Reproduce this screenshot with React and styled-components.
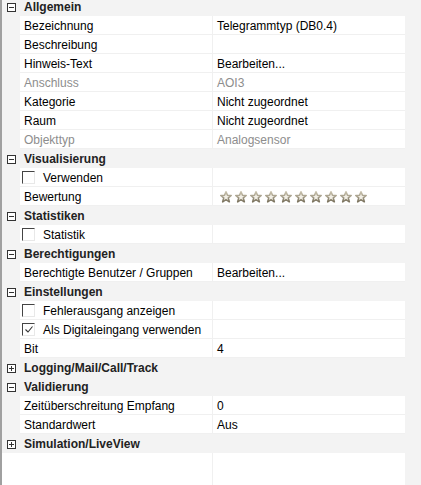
import React from 'react'
import styled, { createGlobalStyle } from 'styled-components'

const groups = [
  {
    title: 'Allgemein',
    open: true,
    rows: [
      { label: 'Bezeichnung', value: 'Telegrammtyp (DB0.4)' },
      { label: 'Beschreibung', value: '' },
      { label: 'Hinweis-Text', value: 'Bearbeiten...' },
      { label: 'Anschluss', value: 'AOI3', disabled: true },
      { label: 'Kategorie', value: 'Nicht zugeordnet' },
      { label: 'Raum', value: 'Nicht zugeordnet' },
      { label: 'Objekttyp', value: 'Analogsensor', disabled: true },
    ],
  },
  {
    title: 'Visualisierung',
    open: true,
    rows: [
      { label: 'Verwenden', check: false },
      { label: 'Bewertung', stars: 10 },
    ],
  },
  {
    title: 'Statistiken',
    open: true,
    rows: [{ label: 'Statistik', check: false }],
  },
  {
    title: 'Berechtigungen',
    open: true,
    rows: [{ label: 'Berechtigte Benutzer / Gruppen', value: 'Bearbeiten...' }],
  },
  {
    title: 'Einstellungen',
    open: true,
    rows: [
      { label: 'Fehlerausgang anzeigen', check: false },
      { label: 'Als Digitaleingang verwenden', check: true },
      { label: 'Bit', value: '4' },
    ],
  },
  { title: 'Logging/Mail/Call/Track', open: false, rows: [] },
  {
    title: 'Validierung',
    open: true,
    rows: [
      { label: 'Zeitüberschreitung Empfang', value: '0' },
      { label: 'Standardwert', value: 'Aus' },
    ],
  },
  { title: 'Simulation/LiveView', open: false, rows: [] },
]

const Global = createGlobalStyle`
  html, body {
    margin: 0;
    padding: 0;
    height: 100%;
    overflow: hidden;
    background: #f3f3f3;
  }
  #root {
    height: 100%;
  }
`

const ExpandBox = ({ open }) => (
  <svg width="9" height="9" viewBox="0 0 9 9">
    <rect x="0.5" y="0.5" width="8" height="8" fill="#fff" stroke="#333" />
    <path d="M2 4.5h5" stroke="#333" />
    {!open && <path d="M4.5 2v5" stroke="#333" />}
  </svg>
)

const Star = () => (
  <svg width="12" height="12" viewBox="0 0 12 12">
    <defs>
      <linearGradient id="starEdge" x1="0" y1="0" x2="0" y2="1">
        <stop offset="0" stopColor="#c9c2ae" />
        <stop offset="1" stopColor="#7d7561" />
      </linearGradient>
    </defs>
    <path
      d="M6 0.8 L7.5 4.3 L11.2 4.5 L8.3 6.9 L9.3 10.8 L6 8.6 L2.7 10.8 L3.7 6.9 L0.8 4.5 L4.5 4.3 Z"
      fill="#f2efe6"
      stroke="url(#starEdge)"
      strokeWidth="1.6"
      strokeLinejoin="round"
    />
  </svg>
)

const PropertyGrid = () => {
  return (
    <>
      <Global />
      <Frame>
        <Panel>
          <List>
            {groups.map((g) => (
              <React.Fragment key={g.title}>
                <GroupHeader>
                  <Toggle>
                    <ExpandBox open={g.open} />
                  </Toggle>
                  <GroupTitle>{g.title}</GroupTitle>
                </GroupHeader>
                {g.open &&
                  g.rows.map((r) => (
                    <Row key={r.label}>
                      <Gutter />
                      <NameCell>
                        {r.check !== undefined ? (
                          <>
                            <CheckBox>
                              {r.check && (
                                <svg width="10" height="9" viewBox="0 0 10 9">
                                  <path d="M1.5 4.5 L4 7 L8.5 1.5" fill="none" stroke="#333" strokeWidth="1.1" />
                                </svg>
                              )}
                            </CheckBox>
                            <CheckLabel>{r.label}</CheckLabel>
                          </>
                        ) : (
                          <Text $disabled={r.disabled}>{r.label}</Text>
                        )}
                      </NameCell>
                      <ValueCell>
                        {r.stars ? (
                          <Stars>
                            {Array.from({ length: r.stars }).map((_, i) => (
                              <Star key={i} />
                            ))}
                          </Stars>
                        ) : (
                          <Text $disabled={r.disabled}>{r.value}</Text>
                        )}
                      </ValueCell>
                    </Row>
                  ))}
              </React.Fragment>
            ))}
          </List>
          <Filler>
            <FillerGutter />
            <FillerName />
            <FillerValue />
          </Filler>
        </Panel>
        <Track />
      </Frame>
    </>
  )
}

export default PropertyGrid

const Frame = styled.div`
  display: flex;
  height: 100%;
  border-left: 2px solid #a0a0a0;
  font-family: "Liberation Sans", Arial, sans-serif;
  font-size: 12px;
  color: #000;
`

const Panel = styled.div`
  width: 403px;
  display: flex;
  flex-direction: column;
  margin-top: -3px;
`

const List = styled.div`
  display: flex;
  flex-direction: column;
`

const Track = styled.div`
  flex: 1;
  background: #f3f3f3;
`

const GroupHeader = styled.div`
  display: flex;
  align-items: center;
  height: 19px;
  padding-top: 1px;
  box-sizing: border-box;
  background: #f3f3f3;
  margin-right: -16px;
`

const Toggle = styled.div`
  width: 22px;
  display: flex;
  justify-content: center;
  padding-right: 4px;
  box-sizing: border-box;

  svg {
    display: block;
  }
`

const GroupTitle = styled.span`
  font-weight: 700;
  color: #222;
`

const Row = styled.div`
  display: grid;
  grid-template-columns: 18px 193px 1fr;
  height: 19px;
`

const Gutter = styled.div`
  background: #f3f3f3;
`

const NameCell = styled.div`
  display: flex;
  align-items: center;
  background: #fff;
  padding: 1px 0 0 4px;
  border-bottom: 1px solid #f0f0f0;
  border-right: 1px solid #f0f0f0;
  white-space: nowrap;
  overflow: hidden;
`

const ValueCell = styled.div`
  display: flex;
  align-items: center;
  background: #fff;
  padding: 1px 0 0 4px;
  border-bottom: 1px solid #f0f0f0;
  white-space: nowrap;
  overflow: hidden;
`

const Text = styled.span`
  color: ${(p) => (p.$disabled ? '#8d8d8d' : '#000')};
`

const CheckBox = styled.span`
  width: 13px;
  height: 13px;
  margin: -1px 0 0 -2px;
  box-sizing: border-box;
  border-left: 1px solid #444;
  border-top: 1px solid #444;
  border-right: 1px solid #e8e8e8;
  border-bottom: 1px solid #e8e8e8;
  display: flex;
  align-items: center;
  justify-content: center;
  flex: none;
`

const CheckLabel = styled.span`
  margin-left: 8px;
`

const Stars = styled.div`
  display: flex;
  gap: 3px;
  padding-left: 3px;

  svg {
    display: block;
  }
`

const Filler = styled.div`
  flex: 1;
  display: grid;
  grid-template-columns: 18px 193px 1fr;
  background: #fff;
`

const FillerGutter = styled.div`
  background: #fff;
`

const FillerName = styled.div`
  border-right: 1px solid #f0f0f0;
`

const FillerValue = styled.div``
